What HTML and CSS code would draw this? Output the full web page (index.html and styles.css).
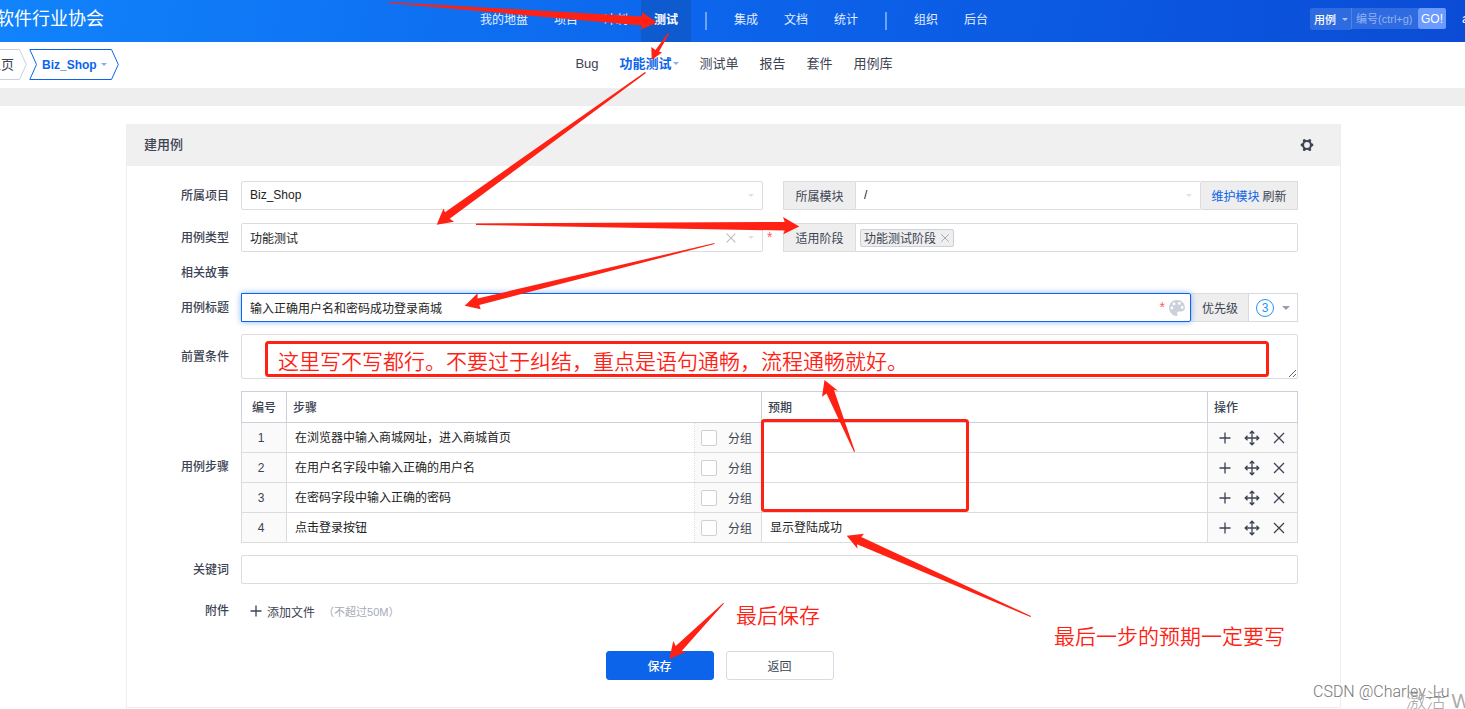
FILE: index.html
```html
<!DOCTYPE html>
<html lang="zh-CN">
<head>
<meta charset="utf-8">
<meta name="viewport" content="width=device-width, initial-scale=1">
<title>建用例</title>
<link rel="stylesheet" href="styles.css">
</head>
<body>
<svg class="defs" aria-hidden="true">
  <symbol id="plus" viewBox="0 0 16 16"><path d="M8 2.5v11M2.5 8h11" fill="none" stroke="currentColor" stroke-width="1.3"/></symbol>
  <symbol id="move" viewBox="0 0 16 16"><path d="M8 1.5v13M1.5 8h13M5.7 3.5 8 1.2l2.3 2.3M5.7 12.5 8 14.8l2.3-2.3M3.5 5.7 1.2 8l2.3 2.3M12.500 5.700 14.800 8l-2.300 2.300" fill="none" stroke="currentColor" stroke-width="1.3"/></symbol>
  <symbol id="close" viewBox="0 0 16 16"><path d="M3 3l10 10M13 3 3 13" fill="none" stroke="currentColor" stroke-width="1.3"/></symbol>
</svg>
<div class="page">
  <header class="topbar">
    <div class="brand"><span>软件行业协会</span></div>
    <nav class="mainnav" aria-label="主导航">
      <a href="#">我的地盘</a><a href="#">项目</a><a href="#">冲刺</a><a href="#" class="active">测试</a>
      <i class="divider"></i>
      <a href="#">集成</a><a href="#">文档</a><a href="#">统计</a>
      <i class="divider"></i>
      <a href="#">组织</a><a href="#">后台</a>
    </nav>
    <form class="search">
      <button type="button" class="search-type">用例<i class="caret"></i></button>
      <input type="text" class="search-input" placeholder="编号(ctrl+g)" aria-label="编号">
      <button type="button" class="search-go">GO!</button>
      <a href="#" class="user">a</a>
    </form>
  </header>

  <div class="subbar">
    <div class="crumbs">
      <a href="#" class="crumb home"><span class="crumb-text">主页</span><svg class="tip" viewBox="0 0 8 31"><path d="M0 .5h.5L7.300 15.500.5 30.500H0"/></svg></a>
      <a href="#" class="crumb current"><svg class="tip" viewBox="0 0 8 31"><path d="M8 .5H.8L7.500 15.500.8 30.500H8"/></svg><span class="crumb-text">Biz_Shop<i class="caret"></i></span><svg class="tip" viewBox="0 0 8 31"><path d="M0 .5h.5L7.300 15.500.5 30.500H0"/></svg></a>
    </div>
    <nav class="subnav" aria-label="测试导航">
      <a href="#">Bug</a>
      <a href="#" class="active">功能测试<i class="caret"></i></a>
      <a href="#">测试单</a>
      <a href="#">报告</a>
      <a href="#">套件</a>
      <a href="#">用例库</a>
    </nav>
  </div>
  <div class="strip"></div>

  <main class="panel">
    <div class="panel-head">
      <h2>建用例</h2>
      <button type="button" class="icon-btn" aria-label="设置">
        <svg width="14" height="14" viewBox="0 0 14 14"><g fill="#3c4353"><circle cx="7" cy="7" r="4" fill="none" stroke="#3c4353" stroke-width="2.200"/><circle cx="2" cy="7" r="1.400"/><circle cx="12" cy="7" r="1.400"/><circle cx="4.300" cy="2.500" r="1.500"/><circle cx="9.700" cy="2.500" r="1.500"/><circle cx="4.300" cy="11.500" r="1.500"/><circle cx="9.700" cy="11.500" r="1.500"/></g></svg>
      </button>
    </div>

    <form class="form">
      <div class="row pair-row">
        <label for="project">所属项目</label>
        <div class="pair">
          <div class="picker"><input id="project" type="text" value="Biz_Shop"><i class="caret"></i></div>
          <span></span>
          <div class="group">
            <label class="addon" for="module">所属模块</label>
            <div class="picker"><input id="module" type="text" value="/"><i class="caret"></i></div>
            <span class="addon links"><a href="#">维护模块</a> <a href="#" class="plain">刷新</a></span>
          </div>
        </div>
      </div>

      <div class="row">
        <label for="type">用例类型</label>
        <div class="pair">
          <div class="picker"><input id="type" type="text" value="功能测试"><svg class="clear"><use href="#close"/></svg><i class="caret"></i></div>
          <span class="star">*</span>
          <div class="group">
            <span class="addon">适用阶段</span>
            <div class="picker tags"><span class="tag">功能测试阶段<svg><use href="#close"/></svg></span></div>
          </div>
        </div>
      </div>

      <div class="row story"><span class="row-label">相关故事</span></div>

      <div class="row">
        <label for="title">用例标题</label>
        <div class="group">
          <div class="picker focused">
            <input id="title" type="text" value="输入正确用户名和密码成功登录商城">
            <span class="star">*</span>
            <svg class="palette" viewBox="0 0 18 18"><path fill="#cbd0db" fill-rule="evenodd" d="M9 1C4.300 1 1 4.400 1 8.700 1 12.800 4 16 7.500 17c2 .4 2.300-.8 1.800-2-.6-1.500.2-2.600 1.600-2.600h2.600c2.100 0 3.500-1.400 3.500-3.600C17 4.300 13.600 1 9 1zM3.900 7.600a1.400 1.400 0 1 1 0 2.800 1.400 1.400 0 0 1 0-2.800zM6 3.600a1.400 1.400 0 1 1 0 2.800 1.400 1.400 0 0 1 0-2.800zm5.300-.6a1.400 1.400 0 1 1 0 2.800 1.400 1.400 0 0 1 0-2.800zm2.900 4a1.400 1.400 0 1 1 0 2.800 1.400 1.400 0 0 1 0-2.800z"/></svg>
          </div>
          <span class="addon pri-label">优先级</span>
          <button type="button" class="pri"><span class="pri-num">3</span><i class="caret"></i></button>
        </div>
      </div>

      <div class="row">
        <label for="pre">前置条件</label>
        <textarea id="pre"></textarea>
      </div>

      <div class="row">
        <span class="row-label">用例步骤</span>
        <table class="steps">
          <colgroup><col class="c-id"><col class="c-step"><col class="c-group"><col class="c-expect"><col class="c-act"></colgroup>
          <thead><tr><th class="id">编号</th><th colspan="2">步骤</th><th>预期</th><th>操作</th></tr></thead>
          <tbody>
            <tr>
              <td class="id">1</td><td class="text step"><input type="text" aria-label="步骤 1" value="在浏览器中输入商城网址，进入商城首页"></td>
              <td class="grp"><label><input type="checkbox">分组</label></td><td class="text"><input type="text" aria-label="预期 1"></td>
              <td class="act"><div><button type="button" aria-label="添加"><svg><use href="#plus"/></svg></button><button type="button" aria-label="移动"><svg><use href="#move"/></svg></button><button type="button" aria-label="删除"><svg><use href="#close"/></svg></button></div></td>
            </tr>
            <tr>
              <td class="id">2</td><td class="text step"><input type="text" aria-label="步骤 2" value="在用户名字段中输入正确的用户名"></td>
              <td class="grp"><label><input type="checkbox">分组</label></td><td class="text"><input type="text" aria-label="预期 2"></td>
              <td class="act"><div><button type="button" aria-label="添加"><svg><use href="#plus"/></svg></button><button type="button" aria-label="移动"><svg><use href="#move"/></svg></button><button type="button" aria-label="删除"><svg><use href="#close"/></svg></button></div></td>
            </tr>
            <tr>
              <td class="id">3</td><td class="text step"><input type="text" aria-label="步骤 3" value="在密码字段中输入正确的密码"></td>
              <td class="grp"><label><input type="checkbox">分组</label></td><td class="text"><input type="text" aria-label="预期 3"></td>
              <td class="act"><div><button type="button" aria-label="添加"><svg><use href="#plus"/></svg></button><button type="button" aria-label="移动"><svg><use href="#move"/></svg></button><button type="button" aria-label="删除"><svg><use href="#close"/></svg></button></div></td>
            </tr>
            <tr>
              <td class="id">4</td><td class="text step"><input type="text" aria-label="步骤 4" value="点击登录按钮"></td>
              <td class="grp"><label><input type="checkbox">分组</label></td><td class="text"><input type="text" aria-label="预期 4" value="显示登陆成功"></td>
              <td class="act"><div><button type="button" aria-label="添加"><svg><use href="#plus"/></svg></button><button type="button" aria-label="移动"><svg><use href="#move"/></svg></button><button type="button" aria-label="删除"><svg><use href="#close"/></svg></button></div></td>
            </tr>
          </tbody>
        </table>
      </div>

      <div class="row">
        <label for="keywords">关键词</label>
        <div class="picker"><input id="keywords" type="text"></div>
      </div>

      <div class="row files">
        <span class="row-label">附件</span>
        <div class="file-line"><button type="button" class="add-file"><svg><use href="#plus"/></svg>添加文件</button><span class="hint">（不超过50M）</span></div>
      </div>

      <div class="actions">
        <button type="button" class="btn primary">保存</button>
        <button type="button" class="btn">返回</button>
      </div>
    </form>
  </main>

  <div class="notes">
    <svg class="arrows" width="1465" height="709" viewBox="0 0 1465 709" fill="#ff2214">
      <polygon points="388,2 642,16.500 642,12 657,22.500 641,29.500 642,25.500 388,3"/>
      <polygon points="668,33 655.500,50 651.300,47 651.700,60 662,52.500 659,51.500 669,34"/>
      <polygon points="645,72 445,212.300 443.500,208.500 436.700,224.700 454,221.700 449.700,218.700 646,73"/>
      <polygon points="476,223.500 784.700,222 783,217 799.300,226.500 783.300,234.300 784.700,230.500 476,225"/>
      <polygon points="714.500,243 477.500,298.500 477.700,293.300 464.700,305.700 480.700,309.300 479.300,305 714.500,244"/>
      <polygon points="855,451.500 834,390 838,390.700 824.500,380 822,396.700 826.500,393.500 854,452"/>
      <polygon points="1031,616 861.300,537 864,533.700 846.700,535.700 857.500,548.700 857,544.300 1030.500,617"/>
      <polygon points="723.200,603 675.700,646 673.300,641 669.300,659 686.300,651.700 681.700,651 724,603.600"/>
      <rect x="266.500" y="342.500" width="1001" height="33" rx="2" fill="none" stroke="#ff2214" stroke-width="3"/>
      <rect x="762.500" y="420.500" width="205" height="90" rx="2" fill="none" stroke="#ff2214" stroke-width="3"/>
    </svg>
    <span class="note note-pre">这里写不写都行。不要过于纠结，重点是语句通畅，流程通畅就好。</span>
    <span class="note note-save">最后保存</span>
    <span class="note note-last">最后一步的预期一定要写</span>
    <span class="watermark">CSDN @Charley_Lu</span>
    <span class="activate">激活 W</span>
  </div>
</div>
</body>
</html>
```
FILE: styles.css
```css
* { box-sizing: border-box; }
body, input, button, textarea {
  font-family: "Liberation Sans", "Noto Sans CJK SC", sans-serif;
  font-size: 12px;
  color: #3c4353;
}
body { margin: 0; background: #fff; }
a { color: inherit; text-decoration: none; }
button { padding: 0; border: 0; background: none; cursor: pointer; }
input { outline: 0; }
.defs { display: none; }
.page { position: relative; min-height: 100vh; overflow: hidden; }
.caret {
  display: inline-block;
  flex: none;
  border: 3px solid transparent;
  border-top-color: currentColor;
  border-bottom: 0;
}

.topbar {
  display: grid;
  grid-template-columns: 1fr auto 1fr;
  height: 42px;
  color: #e4eeff;
  background: linear-gradient(100deg, #1183fb 0%, #0c64eb 50%, #0b4cd6 100%);
}
.brand {
  display: flex;
  justify-content: flex-end;
  width: 104px;
  overflow: hidden;
  font-size: 18px;
  line-height: 38px;
  white-space: nowrap;
  color: #fff;
}
.mainnav { display: flex; align-items: center; padding-left: 3px; }
.mainnav a { padding: 0 13px; line-height: 41px; height: 42px; }
.mainnav .active { background: #0d5bcf; color: #fff; font-weight: bold; }
.divider { width: 2px; height: 18px; margin: 0 14px; background: #6fa3f5; }
.search {
  display: flex;
  justify-content: flex-end;
  align-items: flex-start;
  overflow: hidden;
  padding-top: 8px;
}
.search-type {
  display: flex;
  align-items: center;
  gap: 6px;
  height: 22px;
  padding: 0 3px 0 4px;
  border-radius: 2px 0 0 2px;
  background: #2f6be0;
  color: #fff;
  font-size: 11px;
  font-weight: 500;
}
.search-type .caret { color: #a9c4f6; }
.search-input {
  width: 67px;
  height: 21px;
  padding: 0 4px;
  border: 0;
  border-left: 1px solid #4f83e8;
  background: #2f6be0;
  font-size: 11px;
}
.search-input::placeholder { color: #92b3f2; opacity: 1; }
.search-go {
  width: 28px;
  height: 21px;
  border-radius: 2px;
  background: #6c9bff;
  color: #fff;
}
.user { flex: none; width: 3px; margin-left: 16px; line-height: 22px; font-size: 13px; overflow: hidden; color: #fff; }

.subbar {
  display: grid;
  grid-template-columns: 1fr auto 1fr;
  height: 46px;
}
.crumbs { display: flex; align-items: flex-start; gap: 2px; padding-top: 7px; }
.crumb { display: flex; height: 31px; font-size: 13px; line-height: 28px; }
.crumb .tip { width: 8px; height: 31px; fill: none; stroke: currentColor; }
.crumb-text { display: flex; align-items: center; gap: 4px; border: solid #cbd0db; border-width: 1px 0; }
.home .tip { color: #cbd0db; }
.home .crumb-text { justify-content: flex-end; width: 19px; padding-right: 5px; overflow: hidden; white-space: nowrap; }
.current { color: #0c64eb; font-weight: bold; font-size: 12px; }
.current .crumb-text { padding: 0 4px 0 5px; border-color: #0c64eb; }
.current .caret, .subnav .caret { color: #7fb0ff; }
.subnav { display: flex; gap: 21px; padding-left: 3px; font-size: 13px; line-height: 43px; }
.subnav .active { display: flex; align-items: center; gap: 1px; height: 43px; color: #0c64eb; font-weight: bold; }
.strip { height: 18px; background: #eee; }

.panel { margin: 18px 124px 0 126px; border: 1px solid #eee; }
.panel-head {
  display: flex;
  align-items: center;
  justify-content: space-between;
  height: 41px;
  padding: 0 26px 2px 17px;
  background: #f0f0f0;
}
.panel-head h2 { margin: 0; font-size: 13px; font-weight: 500; line-height: 20px; }
.icon-btn, .icon-btn svg { display: block; }
.form { display: grid; gap: 12px; padding: 15px 42px 27px 0; }
.row { display: grid; grid-template-columns: 102px minmax(0, 1fr); column-gap: 12px; align-items: center; }
.row > label, .row-label { text-align: right; font-weight: 500; line-height: 18px; }
.pair-row { margin-bottom: 1px; }
.story { height: 17px; }
.pair { display: grid; grid-template-columns: 522fr 20px 515fr; }
.group { display: flex; }
.picker {
  display: flex;
  flex: 1;
  align-items: center;
  min-width: 0;
  height: 29px;
  padding-right: 8px;
  border: 1px solid #dcdcdc;
  border-radius: 2px;
  background: #fff;
}
.picker input {
  flex: 1;
  min-width: 0;
  height: 27px;
  padding: 0 8px 1px;
  border: 0;
  background: none;
  color: #222;
}
.picker .caret { color: #dfe1e8; }
.clear { width: 14px; height: 14px; margin-right: 10px; color: #bbb; }
.addon {
  display: flex;
  align-items: center;
  justify-content: center;
  width: 72px;
  padding-bottom: 1px;
  border: 1px solid #dcdcdc;
  border-right: 0;
  background: #eee;
}
.group .picker { border-radius: 0 2px 2px 0; }
.links { gap: 3px; width: 97px; border: 1px solid #dcdcdc; border-left: 0; }
.links a { color: #0c64eb; }
.links .plain { color: #3c4353; }
.star { padding-left: 4px; color: #ff5d5d; font-size: 14px; line-height: 29px; }
.tags { padding-left: 4px; }
.tag {
  display: flex;
  align-items: center;
  gap: 3px;
  height: 18px;
  padding: 0 2px 0 3px;
  border: 1px solid #cbd0db;
  border-radius: 2px;
  background: #eee;
}
.tag svg { width: 12px; height: 12px; color: #aaa; }
.focused { z-index: 1; padding-right: 4px; border-color: #0c64eb; box-shadow: 0 0 6px #8ab4f7; }
.palette { width: 18px; height: 18px; margin-left: 3px; }
.pri-label { width: 57px; }
.pri {
  display: flex;
  align-items: center;
  justify-content: space-between;
  width: 50px;
  height: 29px;
  padding: 0 7px;
  border: 1px solid #d5d9e2;
}
.pri-num {
  width: 18px;
  height: 18px;
  border: 1px solid #2196f3;
  border-radius: 50%;
  color: #2196f3;
  line-height: 16px;
}
.pri .caret { border-width: 4px 4px 0; color: #999fae; }
textarea { display: block; width: 100%; height: 45px; border: 1px solid #dcdcdc; border-radius: 2px; resize: vertical; }

.steps { width: 100%; border-collapse: collapse; table-layout: fixed; }
.c-id { width: 45px; }
.c-step { width: 408px; }
.c-group { width: 67px; }
.c-act { width: 90px; }
.steps th { height: 31px; padding: 0 6px 2px; border: 1px solid #cbd0db; text-align: left; font-weight: 500; }
.steps td { height: 30px; padding: 0; border: 1px solid #dcdcdc; }
.steps th.id { padding: 0 0 2px; text-align: center; }
.steps td.id { padding-right: 6px; background: #fafafa; text-align: center; }
.text input { display: block; width: 100%; height: 28px; padding: 0 8px 2px; border: 0; background: none; color: #222; }
.steps .step { border-right: 0; }
.steps .grp { border-left: 1px dotted #dcdcdc; background: #fafafa; }
.grp label { display: flex; align-items: center; gap: 11px; padding-left: 6px; }
.grp input { appearance: none; width: 16px; height: 16px; margin: 0; border: 1px solid #d0d0d0; border-radius: 2px; background: #fff; }
.act { background: #fafafa; }
.act div { display: flex; gap: 11px; padding-left: 9px; }
.act button, .act svg { display: block; width: 16px; height: 16px; }

.files { margin-top: 6px; height: 18px; }
.file-line { display: flex; align-items: center; }
.add-file { display: flex; align-items: center; gap: 3px; padding-left: 7px; }
.add-file svg { width: 16px; height: 16px; }
.hint { margin-left: 8px; font-size: 11px; color: #a6aab8; }
.actions { display: flex; justify-content: center; gap: 12px; margin-top: 19px; padding-left: 14px; }
.btn { width: 108px; height: 29px; border: 1px solid #d8dbe5; border-radius: 3px; background: #fff; }
.primary { border-color: #0c64eb; background: #0c64eb; color: #fff; font-weight: 500; }

.notes { position: absolute; inset: 0; z-index: 5; overflow: hidden; pointer-events: none; }
.arrows { position: absolute; left: 0; top: 0; }
.note { position: absolute; font-size: 21px; font-weight: 350; line-height: 30px; white-space: nowrap; color: #ff2214; }
.note-pre { left: 278px; top: 347px; }
.note-save { left: 736px; top: 601px; }
.note-last { left: 1054px; top: 622px; }
.watermark { position: absolute; left: 1313px; top: 682px; font-family: Roboto, sans-serif; font-size: 16px; font-weight: 300; line-height: 20px; color: #777; white-space: nowrap; }
.activate { position: absolute; left: 1406px; top: 686px; font-size: 20px; font-weight: 300; line-height: 30px; color: #aaa; white-space: nowrap; }
```
